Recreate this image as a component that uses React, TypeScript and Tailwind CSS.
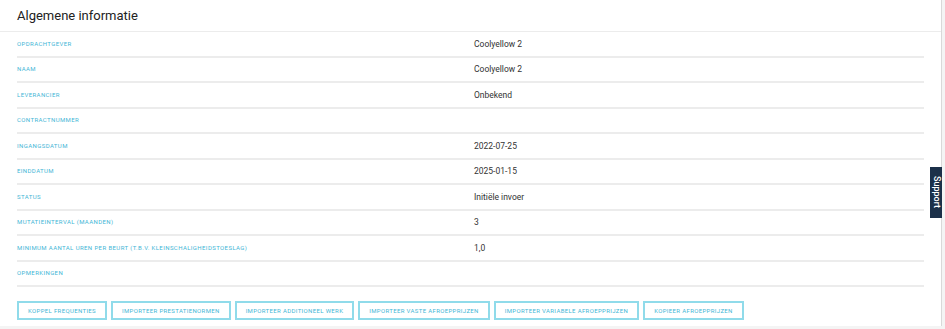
const rows: [string, string][] = [
  ['Opdrachtgever', 'Coolyellow 2'],
  ['Naam', 'Coolyellow 2'],
  ['Leverancier', 'Onbekend'],
  ['Contractnummer', ''],
  ['Ingangsdatum', '2022-07-25'],
  ['Einddatum', '2025-01-15'],
  ['Status', 'Initiële invoer'],
  ['Mutatieinterval (maanden)', '3'],
  ['Minimum aantal uren per beurt (t.b.v. kleinschaligheidstoeslag)', '1,0'],
  ['Opmerkingen', ''],
]

const buttons = [
  'Koppel frequenties',
  'Importeer prestatienormen',
  'Importeer additioneel werk',
  'Importeer vaste afroepprijzen',
  'Importeer variabele afroepprijzen',
  'Kopieer afroepprijzen',
]

export default function App() {
  return (
    <div
      className="relative w-[945px] h-[329px] bg-[#f4f4f4] overflow-hidden"
      style={{ fontFamily: 'Roboto, "Noto Sans", sans-serif' }}
    >
      <div className="w-[942px] h-[326px] bg-white border-r border-[#d9d9d9] flex flex-col">
        {/* Header */}
        <div className="h-[32px] flex items-center px-[17px] border-b border-[#ececec]">
          <h2 className="text-[13px] text-[#222] leading-none">Algemene informatie</h2>
        </div>

        {/* Fields */}
        <div className="px-[17px]">
          {rows.map(([label, value]) => (
            <div
              key={label}
              className="grid grid-cols-[457px_1fr] items-center h-[25.5px] border-b-2 border-[#ececec]"
            >
              <span className="text-[6px] uppercase tracking-[0.4px] text-[#3fb6d6] leading-none">
                {label}
              </span>
              <span className="text-[8.5px] text-[#333] leading-none">{value}</span>
            </div>
          ))}
        </div>

        {/* Actions */}
        <div className="flex gap-[4px] px-[17px] mt-[14px]">
          {buttons.map(b => (
            <button
              key={b}
              className="h-[19px] px-[9px] border-2 border-[#90dbea] bg-white text-[6px] uppercase tracking-[0.35px] text-[#3fb6d6] leading-none whitespace-nowrap"
            >
              {b}
            </button>
          ))}
        </div>
      </div>

      {/* Support tab */}
      <div className="absolute right-[3px] top-[167px] w-[12px] h-[51px] bg-[#1b3049] flex items-center justify-center">
        <span className="[writing-mode:vertical-rl] text-white text-[9px] font-medium leading-none">
          Support
        </span>
      </div>
    </div>
  )
}
